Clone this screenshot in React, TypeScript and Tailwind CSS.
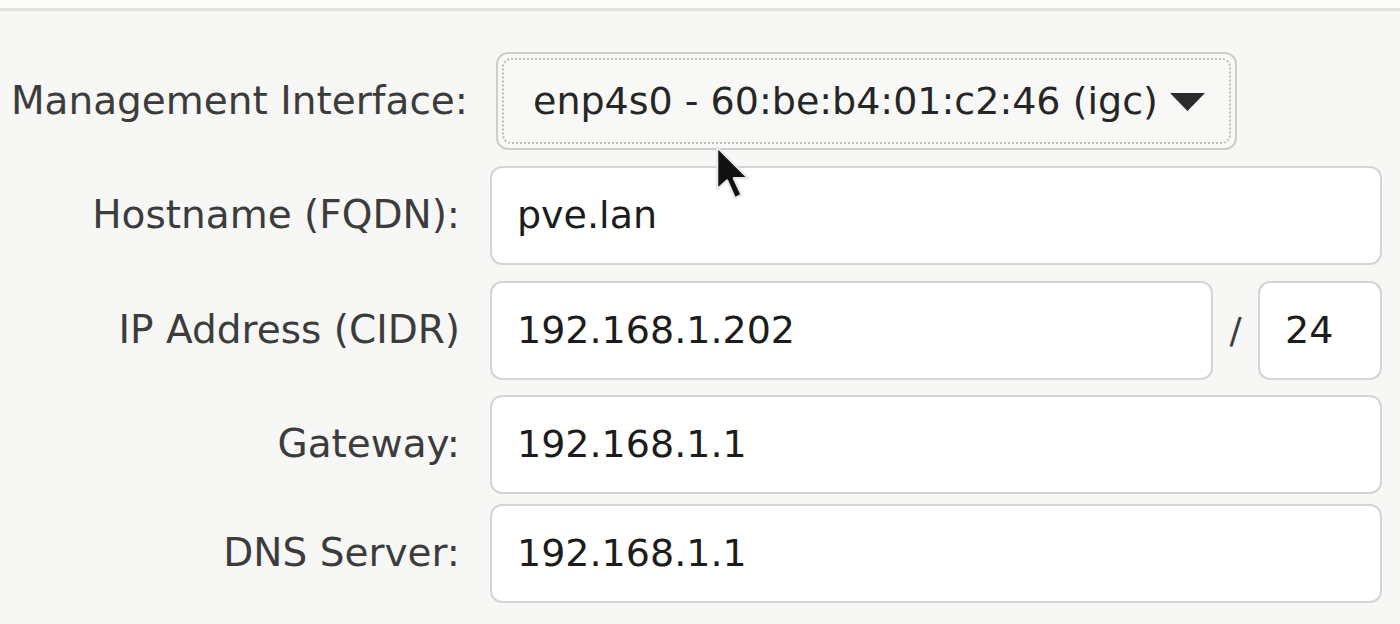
import React from 'react';

const Field = ({ value, className = '' }: { value: string; className?: string }) => (
  <div className={`h-[99px] bg-white border-2 border-[#d4d4d2] rounded-[12px] flex items-center pl-[25px] text-[38px] text-[#1c1c1c] ${className}`}>
    {value}
  </div>
);

const Label = ({ text, className = '' }: { text: string; className?: string }) => (
  <div className={`text-[39px] text-[#3c3c3c] text-right whitespace-nowrap ${className}`}>{text}</div>
);

export default function App() {
  return (
    <div className="relative w-[1400px] h-[624px] overflow-hidden bg-[#f7f7f5] font-['DejaVu_Sans',sans-serif]">
      <div className="h-[11px] bg-[#fbfbfa] border-b-[3px] border-[#e3e3e1]" />

      <div className="grid grid-cols-[490px_1fr] items-center mt-[41px] pr-[18px]">
        <Label text="Management Interface:" className="pr-[22px]" />
        <div className="ml-[6px] w-[741px] h-[98px] rounded-[12px] border-2 border-[#cdcdcb] bg-[#f8f8f6] p-[4px]">
          <div className="h-full rounded-[9px] border-2 border-dotted border-[#bdbdbb] flex items-center pl-[29px] text-[38px] text-[#262626]">
            <span>enp4s0 - 60:be:b4:01:c2:46 (igc)</span>
            <svg width="35" height="18" viewBox="0 0 35 18" className="ml-[12px] mt-[2px]">
              <path d="M0 0 H35 L17.5 18 Z" fill="#2b2b2b" />
            </svg>
          </div>
        </div>

        <Label text="Hostname (FQDN):" className="pr-[30px] mt-[16px]" />
        <Field value="pve.lan" className="mt-[16px]" />

        <Label text="IP Address (CIDR)" className="pr-[30px] mt-[16px]" />
        <div className="mt-[16px] flex items-center">
          <Field value="192.168.1.202" className="flex-1" />
          <span className="w-[45px] text-center text-[36px] text-[#3c3c3c]">/</span>
          <Field value="24" className="w-[124px] pl-[19px]" />
        </div>

        <Label text="Gateway:" className="pr-[30px] mt-[15px]" />
        <Field value="192.168.1.1" className="mt-[15px]" />

        <Label text="DNS Server:" className="pr-[30px] mt-[10px]" />
        <Field value="192.168.1.1" className="mt-[10px]" />
      </div>

      <svg width="46" height="62" viewBox="0 0 40 56" className="absolute left-[713px] top-[145px]">
        <path d="M3 2 L3 40 L12 32 L19 48 L25 45 L18 30 L31 30 Z" fill="#111" stroke="#e8e8e8" strokeWidth="2" strokeLinejoin="round" />
      </svg>
    </div>
  );
}
